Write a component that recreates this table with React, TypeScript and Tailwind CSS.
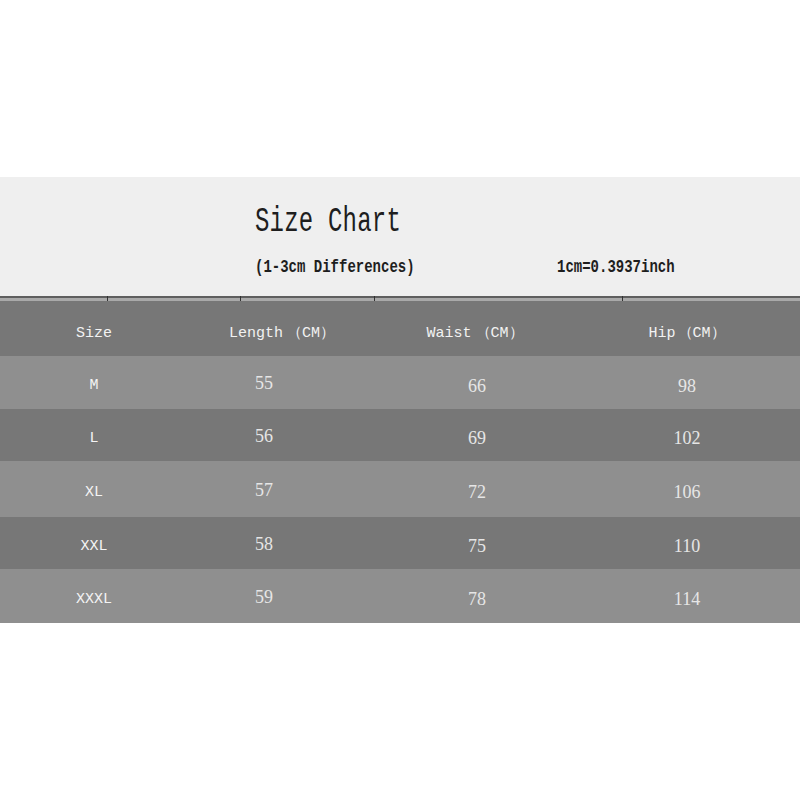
import React from "react";

const rows = [
  { size: "M", length: "55", waist: "66", hip: "98", h: "h-[53px]" },
  { size: "L", length: "56", waist: "69", hip: "102", h: "h-[52px]" },
  { size: "XL", length: "57", waist: "72", hip: "106", h: "h-[56px]" },
  { size: "XXL", length: "58", waist: "75", hip: "110", h: "h-[52px]" },
  { size: "XXXL", length: "59", waist: "78", hip: "114", h: "h-[54px]" },
];

const mono = { fontFamily: '"Liberation Mono", "DejaVu Sans Mono", monospace' };
const serif = { fontFamily: '"Liberation Serif", "DejaVu Serif", serif' };

function Row({ size, length, waist, hip, h, dark }: { size: string; length: string; waist: string; hip: string; h: string; dark: boolean }) {
  return (
    <div className={`grid grid-cols-[188px_188px_202px_222px] items-center ${h} ${dark ? "bg-[#777777]" : "bg-[#8f8f8f]"}`}>
      <div className="text-center text-[15px] text-[#f4f4f4] pt-[8px]" style={mono}>{size}</div>
      <div className="text-center text-[18px] text-[#e6e6e6] pr-[36px] pt-[2px]" style={serif}>{length}</div>
      <div className="text-center text-[18px] text-[#e6e6e6] pt-[7px]" style={serif}>{waist}</div>
      <div className="text-center text-[18px] text-[#e6e6e6] pt-[7px] pr-[4px]" style={serif}>{hip}</div>
    </div>
  );
}

export default function App() {
  return (
    <div className="w-[800px] h-[800px] bg-white flex flex-col">
      <div className="h-[177px]" />
      <div className="h-[119px] bg-[#efefef] relative">
        <div
          className="absolute left-[255px] top-[19px] text-[24px] text-[#1e1e1e] origin-top-left scale-y-[1.45] tracking-[0.2px]"
          style={mono}
        >
          Size Chart
        </div>
        <div className="absolute left-[255px] top-[77px] text-[14px] text-[#1e1e1e] origin-top-left scale-y-[1.3] font-bold" style={mono}>
          (1-3cm Differences)
        </div>
        <div className="absolute left-[557px] top-[77px] text-[14px] text-[#1e1e1e] origin-top-left scale-y-[1.3] font-bold" style={mono}>
          1cm=0.3937inch
        </div>
      </div>
      <div className="h-[2px] bg-[#5e5e5e] relative">
        <div className="absolute left-[107px] top-[0px] w-[1px] h-[5px] bg-[#333]" />
        <div className="absolute left-[240px] top-[0px] w-[1px] h-[5px] bg-[#333]" />
        <div className="absolute left-[374px] top-[0px] w-[1px] h-[5px] bg-[#333]" />
        <div className="absolute left-[622px] top-[0px] w-[1px] h-[5px] bg-[#333]" />
      </div>
      <div className="h-[3px] bg-[#a9a9a9]" />
      <div className="grid grid-cols-[188px_188px_202px_222px] items-center h-[55px] bg-[#777777] text-[15px] text-[#f2f2f2] pt-[12px]" style={mono}>
        <div className="text-center">Size</div>
        <div className="text-center">Length<span className="ml-[4px]">（CM）</span></div>
        <div className="text-center pr-[4px]">Waist<span className="ml-[4px]">（CM）</span></div>
        <div className="text-center pr-[4px]">Hip<span className="ml-[2px]">（CM）</span></div>
      </div>
      {rows.map((r, i) => (
        <Row key={r.size} {...r} dark={i % 2 === 1} />
      ))}
      <div className="flex-1 bg-white" />
    </div>
  );
}
